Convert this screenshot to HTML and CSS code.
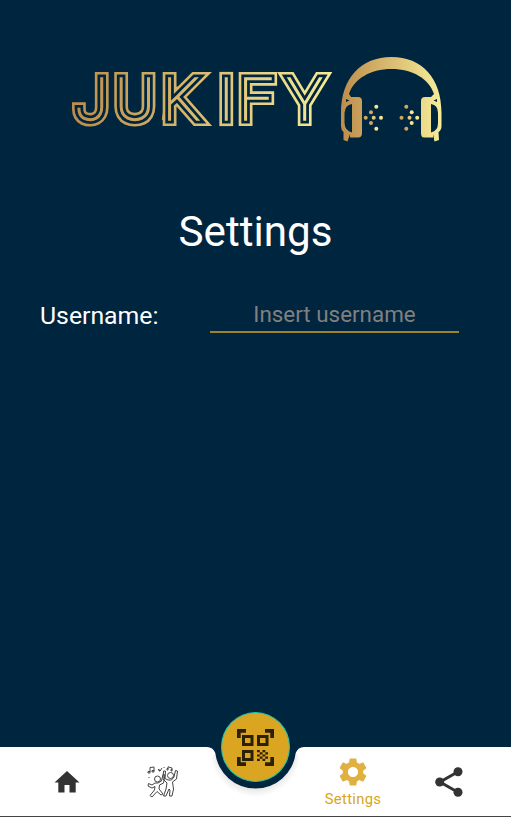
FILE: index.html
```html
<!DOCTYPE html>
<html lang="en">
<head>
<meta charset="utf-8">
<title>Jukify – Settings</title>
<link rel="stylesheet" href="styles.css">
</head>
<body>
<main class="screen">
  <header class="brand">
    <svg class="logo" width="380" height="96" viewBox="68 50 380 96" role="img" aria-label="Jukify">
      <defs>
        <linearGradient id="gold" gradientUnits="userSpaceOnUse" x1="73" y1="0" x2="332" y2="0">
          <stop offset="0" stop-color="#bd8d4b"/><stop offset="1" stop-color="#f7ec98"/>
        </linearGradient>
        <linearGradient id="goldPhones" gradientUnits="userSpaceOnUse" x1="341" y1="0" x2="441" y2="0">
          <stop offset="0" stop-color="#bd8d4b"/><stop offset="1" stop-color="#f7ec98"/>
        </linearGradient>
        <text id="word" class="word" x="75.500 115 163 218.500 239 287" y="120.400">JUKIFY</text>
      </defs>
      <use href="#word" class="line-outer"/>
      <use href="#word" class="line-gap"/>
      <use href="#word" class="line-core"/>
      <g fill="url(#goldPhones)">
        <path fill-rule="evenodd" d="M341 113C341 78 361 57 391.500 57S441.500 78 441.500 113V126Q441.500 130 438.500 132L439 140L434.500 141.500L433 134V137.500H424Q421 137.500 421 133V101Q421 97 425 97H431L434 94C429 79 413 69 391.500 69S354 79 349 94L351 97H358Q362 97 362 101V133Q362 137.500 358 137.500H350V134L347.500 141.500L343.500 140V132Q341 130 341 126ZM346 99V102L349.500 100.500ZM437 99L433.500 100.500L437 102ZM352 104Q345 105 344.500 113V123Q345 131 352 132.500ZM431 104V132.500Q438 131 438 123V113Q438 105 431 104Z"/>
      </g>
      <g fill="#cfa764">
        <circle cx="365.700" cy="117.700" r="2"/><circle cx="371" cy="112.200" r="2"/><circle cx="371" cy="123" r="2"/>
        <circle cx="401.500" cy="117.700" r="2"/><circle cx="406.300" cy="106.700" r="2"/><circle cx="406.300" cy="128.700" r="2"/>
      </g>
      <g fill="#e2c87b">
        <circle cx="373.700" cy="117.700" r="2"/><circle cx="409.500" cy="117.700" r="2"/>
      </g>
      <g fill="#f5e894">
        <circle cx="376.300" cy="106.700" r="2"/><circle cx="376.300" cy="128.700" r="2"/><circle cx="381" cy="117.700" r="2"/>
        <circle cx="411.700" cy="112.200" r="2"/><circle cx="411.700" cy="123" r="2"/><circle cx="417.200" cy="117.700" r="2"/>
      </g>
    </svg>
  </header>
  <h1 class="title">Settings</h1>
  <form class="field">
    <label class="label" for="username">Username:</label>
    <input class="input" id="username" type="text" placeholder="Insert username">
  </form>
  <nav class="nav">
    <svg class="nav-bg" width="511" height="69" viewBox="0 0 511 69" aria-hidden="true">
      <defs>
        <radialGradient id="shade" gradientUnits="userSpaceOnUse" cx="255.500" cy="4" r="46">
          <stop offset=".8" stop-color="#000" stop-opacity=".1"/><stop offset="1" stop-color="#000" stop-opacity="0"/>
        </radialGradient>
      </defs>
      <path d="M0 0H207Q213 0 215.300 6A40.500 40.500 0 0 0 295.700 6Q298 0 304 0H511V69H0Z"/>
      <path fill="url(#shade)" d="M215.300 6A40.500 40.500 0 0 0 295.700 6L306 20V60H205V20Z"/>
    </svg>
    <a class="tab" aria-label="Home">
      <svg width="26" height="22" viewBox="0 0 26 22"><path d="M13 0L25.500 11.500H21.700V21.500H15.500V14H10.500V21.500H4.300V11.500H.5Z"/></svg>
    </a>
    <a class="tab" aria-label="Party">
      <svg class="party" width="32" height="32" viewBox="0 0 32 32">
        <circle cx="10.500" cy="13" r="3"/><circle cx="23.500" cy="9.500" r="3"/>
        <path d="M8 17L5 19L1.500 17.500L1 20L5 22L8 20.500L7.500 24L3 29.500L5 31L10 25.500L14 29L16 28L12 23L12.500 19L16.500 17L18 9L16 8.500L14.500 15L11 17Z"/>
        <path d="M21 14L18 12.500L18.500 5L16.500 5L16 13L20 17L19 23L16.500 30H19L22 23L23 24L22.500 30H25L26.500 23L25.500 16L29.500 13L30.500 5L28.500 4.500L27 11L24.500 14Z"/>
        <path d="M3 6V1.500L7 1V5M11 3L13 5L15 2M21 3V.8L25 2V4"/>
        <path d="M1 5.500H3V7H1ZM5 4.500H7V6H5ZM12 4H13V5H12ZM20 2.500H21V4H20ZM24 3.500H25V5H24ZM2 11V12M17 1V2"/>
      </svg>
    </a>
    <a class="fab" aria-label="Scan code">
      <svg width="37" height="37" viewBox="0 0 37 37">
        <path d="M0 9V0H9V3.700H3.700V9ZM28 0H37V9H33.300V3.700H28ZM0 28H3.700V33.300H9V37H0ZM33.300 28H37V37H28V33.300H33.300Z"/>
        <path fill-rule="evenodd" d="M5 6H16.500V17H5ZM8 9V14H13.500V9ZM20 6H31.500V17H20ZM23 9V14H28.500V9ZM5 21H16.500V32H5ZM8 24V29H13.500V24Z"/>
        <path d="M20 21h2.800v2.200h-2.800zM25.500 21h2.800v2.200h-2.800zM22.800 23.200h2.700v2.200h-2.700zM28.300 23.200h2.700v2.200h-2.700zM20 25.400h2.800v2.200h-2.800zM25.500 25.400h2.800v2.200h-2.800zM22.800 27.600h2.700v2.200h-2.700zM28.300 27.600h2.700v2.200h-2.700zM20 29.800h2.800v2.200h-2.800zM25.500 29.800h2.800v2.200h-2.800z"/>
      </svg>
    </a>
    <a class="tab tab-settings tab-active">
      <svg width="34" height="34" viewBox="0 0 24 24"><path d="M19.140 12.940c.04-.3.060-.61.060-.94 0-.32-.02-.64-.07-.94l2.030-1.580c.18-.14.230-.41.120-.61l-1.920-3.320c-.12-.22-.37-.29-.59-.22l-2.390.96c-.5-.38-1.030-.7-1.620-.94L14.400 2.810c-.04-.24-.24-.41-.48-.41h-3.840c-.24 0-.43.17-.47.41L9.250 5.350c-.59.24-1.130.57-1.620.94l-2.390-.96c-.22-.08-.47 0-.59.22L2.740 8.870c-.12.21-.08.47.12.61l2.030 1.580c-.05.3-.09.63-.09.94s.02.64.07.94l-2.030 1.580c-.18.14-.23.41-.12.61l1.920 3.320c.12.22.37.29.59.22l2.390-.96c.5.38 1.030.7 1.620.94l.36 2.540c.05.24.24.41.48.41h3.840c.24 0 .44-.17.47-.41l.36-2.540c.59-.24 1.130-.56 1.620-.94l2.390.96c.22.08.47 0 .59-.22l1.920-3.320c.12-.22.07-.47-.12-.61l-2.010-1.580zM12 15.600c-1.980 0-3.600-1.620-3.600-3.600s1.620-3.600 3.600-3.600 3.600 1.620 3.600 3.600-1.620 3.600-3.600 3.600z"/></svg>
      <span class="tab-text">Settings</span>
    </a>
    <a class="tab" aria-label="Share">
      <svg width="28" height="30" viewBox="0 0 28 30"><path class="share-line" d="M23 4.700L5 15L23 25.300"/><circle cx="23" cy="4.700" r="4.500"/><circle cx="4.700" cy="15" r="4.500"/><circle cx="23" cy="25.300" r="4.500"/></svg>
    </a>
  </nav>
</main>
</body>
</html>
```
FILE: styles.css
```css
* { box-sizing: border-box; }

body {
  margin: 0;
  background: #00253e;
  font-family: Roboto, "Liberation Sans", sans-serif;
  color: #fff;
}

.screen {
  display: flex;
  flex-direction: column;
  width: 511px;
  height: 817px;
  overflow: hidden;
}

.brand {
  height: 146px;
  padding: 50px 0 0 68px;
}

.logo { display: block; }

.word {
  font-family: Roboto, sans-serif;
  font-weight: 100;
  font-size: 59.500px;
}

.line-outer { fill: url(#gold); stroke: url(#gold); stroke-width: 12.200px; stroke-miterlimit: 3; }
.line-gap { fill: #00253e; stroke: #00253e; stroke-width: 7px; stroke-miterlimit: 3; }
.line-core { fill: url(#gold); stroke: url(#gold); stroke-width: 1.400px; }

.title {
  margin: 61px 0 0;
  font-size: 42.200px;
  font-weight: 400;
  line-height: 50px;
  text-align: center;
}

.field {
  display: flex;
  margin: 38px 52px 0 40px;
  height: 38px;
}

.label {
  width: 170px;
  font-size: 24.800px;
  line-height: 42px;
}

.input {
  width: 249px;
  height: 38px;
  padding: 1px 0 0;
  border: 0;
  border-bottom: 2px solid #a08328;
  border-radius: 0;
  outline: 0;
  background: none;
  color: #fff;
  font: 400 22.400px Roboto, sans-serif;
  text-align: center;
}

.input::placeholder { color: #808080; opacity: 1; }

.nav {
  position: relative;
  display: grid;
  grid-template-columns: 96px 96px 94px 96px 96px;
  height: 70px;
  margin-top: auto;
  padding-left: 19px;
  border-bottom: 1px solid #444;
}

.nav-bg {
  position: absolute;
  top: 0;
  left: 0;
  fill: #fff;
}

.tab {
  position: relative;
  display: flex;
  flex-direction: column;
  align-items: center;
  justify-content: center;
  height: 69px;
  fill: #333;
}

.party { fill: none; stroke: #444; stroke-width: 1; }

.share-line { fill: none; stroke: #333; stroke-width: 3; }

.tab-settings {
  justify-content: flex-start;
  padding-top: 8px;
}

.tab-active { color: #daa520; fill: #e0b040; }

.tab-text {
  margin-top: 1px;
  font-size: 14.800px;
  line-height: 18px;
  letter-spacing: 0.300px;
}

.fab {
  position: relative;
  top: -35px;
  left: -2.500px;
  justify-self: center;
  display: grid;
  place-items: center;
  width: 69px;
  height: 70px;
  border: 1px solid #20c8b0;
  border-radius: 50%;
  background: #daa520;
  fill: #2c2107;
}
```
